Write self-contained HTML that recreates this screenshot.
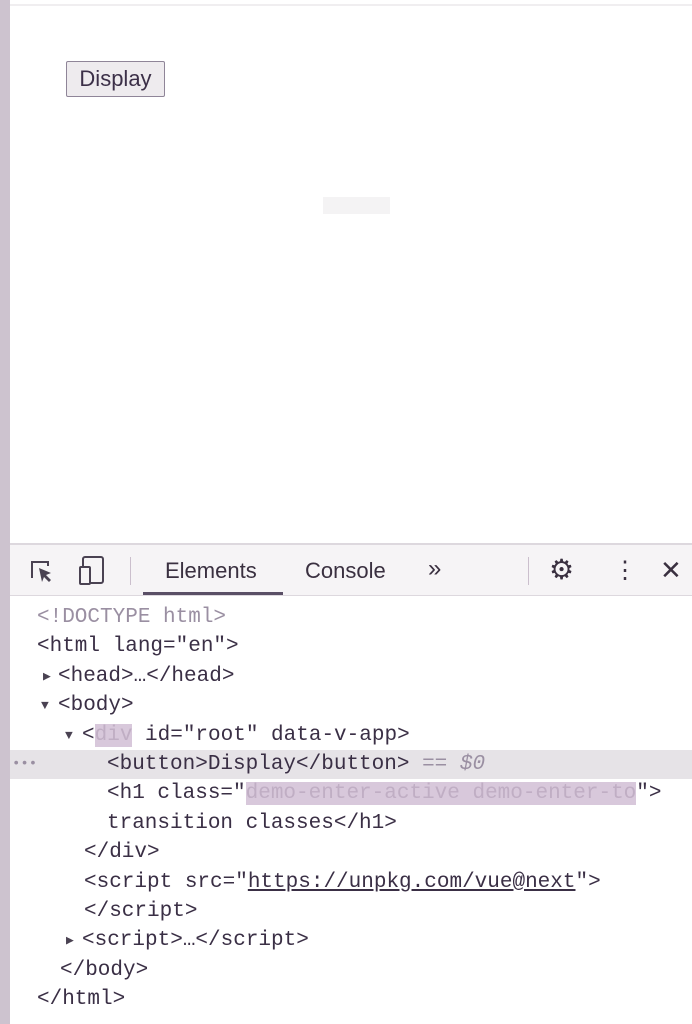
<!DOCTYPE html>
<html><head><style>
body{margin:0;width:692px;height:1024px;background:#fff;position:relative;overflow:hidden;font-family:"Liberation Sans",sans-serif}
.strip{position:absolute;left:0;top:0;width:10px;height:1024px;background:#cdc3cf}
.topline{position:absolute;left:10px;top:4px;width:682px;height:2px;background:#f0eef0}
.btn{position:absolute;left:66px;top:61px;width:99px;height:36px;border:1px solid #8f8598;background:#eeebee;box-sizing:border-box;font-size:22px;color:#3c3048;text-align:center;line-height:34px;border-radius:2px}
.ghost{position:absolute;left:323px;top:197px;width:67px;height:17px;background:#f4f3f4}
.tb{position:absolute;left:10px;top:543px;width:682px;height:53px;background:#f6f4f6;border-top:2px solid #ddd8de;border-bottom:1px solid #ddd8de;box-sizing:border-box}
.tab{position:absolute;top:558px;font-size:22px;color:#3a3040}
.ul{position:absolute;left:143px;top:592px;width:140px;height:3px;background:#5a4f66}
.sep{position:absolute;top:557px;width:1px;height:28px;background:#cbbfcd}
.code{position:absolute;left:0;top:603px;width:692px;font-family:"Liberation Mono",monospace;font-size:21px;color:#3a2f45}
.l{height:29.4px;line-height:29.4px;white-space:pre;position:relative}
.t{position:absolute;font-size:13px;color:#4a4252}
.g{color:#9a8fa2}
.hl{background:#e6e3e7;margin-left:10px}
.sel{background:#d8c8db;color:#c0aec4}
</style></head><body>
<div class="strip"></div><div class="topline"></div>
<div class="btn">Display</div>
<div class="ghost"></div>
<div class="tb"></div>
<svg style="position:absolute;left:28px;top:558px" width="30" height="28" viewBox="0 0 30 28"><path d="M4 20V4h16v4" fill="none" stroke="#4a4252" stroke-width="2"/><path d="M11 10l12 5-5 2 5 5-2 2-5-5-2 5z" fill="#4a4252"/></svg>
<svg style="position:absolute;left:78px;top:555px" width="30" height="32" viewBox="0 0 30 32"><rect x="5" y="2" width="20" height="26" rx="2" fill="none" stroke="#4a4252" stroke-width="2"/><rect x="2" y="12" width="10" height="17" rx="1" fill="#f6f4f6" stroke="#4a4252" stroke-width="2"/></svg>
<div class="sep" style="left:130px"></div>
<div class="tab" style="left:165px">Elements</div>
<div class="tab" style="left:305px">Console</div>
<div class="tab" style="left:428px;font-size:24px;top:555px">»</div>
<div class="ul"></div>
<div class="sep" style="left:528px"></div>
<div class="tab" style="left:549px;font-size:28px;top:553px">⚙</div>
<div class="tab" style="left:613px;font-size:24px;top:556px">⋮</div>
<div class="tab" style="left:660px;font-size:26px;top:555px">✕</div>
<div class="code">
<div class="l g" style="padding-left:37px">&lt;!DOCTYPE html&gt;</div>
<div class="l" style="padding-left:37px">&lt;html lang="en"&gt;</div>
<div class="l" style="padding-left:58px"><span class="t" style="left:43px">▶</span>&lt;head&gt;…&lt;/head&gt;</div>
<div class="l" style="padding-left:58px"><span class="t" style="left:41px">▼</span>&lt;body&gt;</div>
<div class="l" style="padding-left:82px"><span class="t" style="left:65px">▼</span>&lt;<span class="sel">div</span> id="root" data-v-app&gt;</div>
<div class="l hl" style="padding-left:97px"><span class="g" style="position:absolute;left:2px;font-size:14px">•••</span>&lt;button&gt;Display&lt;/button&gt; <span class="g">== <i>$0</i></span></div>
<div class="l" style="padding-left:107px">&lt;h1 class="<span class="sel">demo-enter-active demo-enter-to</span>"&gt;</div>
<div class="l" style="padding-left:107px">transition classes&lt;/h1&gt;</div>
<div class="l" style="padding-left:84px">&lt;/div&gt;</div>
<div class="l" style="padding-left:84px">&lt;script src="<u>https://unpkg.com/vue@next</u>"&gt;</div>
<div class="l" style="padding-left:84px">&lt;/script&gt;</div>
<div class="l" style="padding-left:82px"><span class="t" style="left:66px">▶</span>&lt;script&gt;…&lt;/script&gt;</div>
<div class="l" style="padding-left:60px">&lt;/body&gt;</div>
<div class="l" style="padding-left:37px">&lt;/html&gt;</div>
</div>
</body></html>
